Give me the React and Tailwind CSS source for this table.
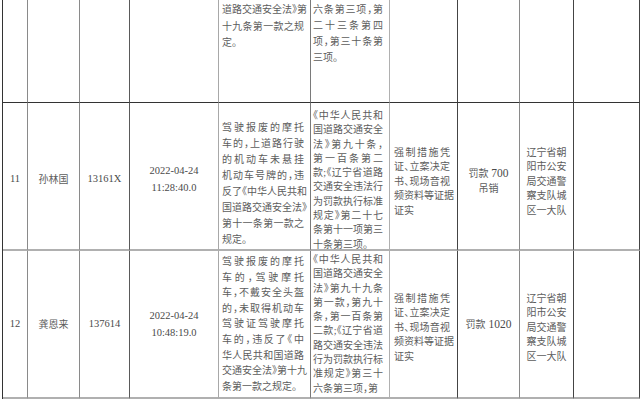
import React from 'react';

const cjk = "font-['Liberation_Serif','Noto_Sans_CJK_SC',serif] [font-feature-settings:'halt']";

const Lines = ({ lines, lead = 'leading-[16px]', justify = true, center = false }) => (
  <div className={`${lead} ${center ? 'text-center' : ''}`}>
    {lines.map((l, i) => {
      const last = i === lines.length - 1;
      return (
        <div
          key={i}
          className={`whitespace-nowrap ${
            justify && !last ? 'text-justify [text-align-last:justify]' : center ? 'text-center' : 'text-left'
          }`}
        >
          {l}
        </div>
      );
    })}
  </div>
);

const evidence = ['强制措施凭', '证、立案决定', '书、现场音视', '频资料等证据', '证实'];
const unit = ['辽宁省朝', '阳市公安', '局交通警', '察支队城', '区一大队'];

const rows = [
  {
    no: '11',
    name: '孙林国',
    id: '13161X',
    date: '2022-04-24',
    time: '11:28:40.0',
    act: [
      '驾驶报废的摩托',
      '车的，上道路行驶',
      '的机动车未悬挂',
      '机动车号牌的，违',
      '反了《中华人民共和',
      '国道路交通安全法》',
      '第十一条第一款之',
      '规定。',
    ],
    law: [
      '《中华人民共和',
      '国道路交通安全',
      '法》第九十条，',
      '第一百条第二',
      '款;《辽宁省道路',
      '交通安全违法行',
      '为罚款执行标准',
      '规定》第二十七',
      '条第十一项第三',
      '十条第三项。',
    ],
    fine: ['罚款 700', '吊销'],
    pad: {
      base: 'pt-[6px]',
      act: 'pt-[17px] leading-[16px]',
      law: 'pt-[6px]',
      side: 'pt-[12px]',
      fine: 'pt-[10px]',
    },
  },
  {
    no: '12',
    name: '龚恩来',
    id: '137614',
    date: '2022-04-24',
    time: '10:48:19.0',
    act: [
      '驾驶报废的摩托',
      '车的，驾驶摩托',
      '车，不戴安全头盔',
      '的，未取得机动车',
      '驾驶证驾驶摩托',
      '车的，违反了《中',
      '华人民共和国道路',
      '交通安全法》第十九',
      '条第一款之规定。',
    ],
    law: [
      '《中华人民共和',
      '国道路交通安全',
      '法》第九十九条',
      '第一款，第九十',
      '条，第一百条第',
      '二款;《辽宁省道',
      '路交通安全违法',
      '行为罚款执行标',
      '准规定》第三十',
      '六条第三项，第',
    ],
    fine: ['罚款 1020'],
    pad: {
      base: 'pt-0',
      act: 'pt-[3px] leading-[15.6px]',
      law: 'pt-[2px]',
      side: 'pt-[8px]',
      fine: 'pt-0',
    },
  },
];

const rightLines = [
  'border-r-[#8a8a8a]',
  'border-r-[#8a8a8a]',
  'border-r-[#5a5a5a]',
  'border-r-[#a8a8a8]',
  'border-r-[#7a7a7a]',
  'border-r-[#b0b0b0]',
  'border-r-[#444]',
  'border-r-[#8a8a8a]',
  'border-r-[#444]',
  'border-r-[#444]',
];

const rowLine = 'border-b-2 border-b-[#b0b0b0]';

const Cell = ({ i, row, className = '', children }) => (
  <div className={`border-r ${rightLines[i]} ${row} flex flex-col ${className}`}>{children}</div>
);

export default function App() {
  return (
    <div className={`w-[641px] h-[400px] bg-white overflow-hidden text-[10px] text-[#5c5c5c] ${cjk}`}>
      <div className="ml-[2px] border-l border-l-[#333] grid grid-cols-[25px_52px_50px_89px_92px_79px_68px_62px_54px_66px] grid-rows-[103px_148px_148px]">
        {/* tail of the previous record */}
        {[0, 1, 2, 3].map((i) => (
          <Cell key={i} i={i} row="border-b border-b-[#333]" />
        ))}
        <Cell i={4} row="border-b border-b-[#333]" className="pt-[2px] pl-[3px] pr-[6px]">
          <Lines lines={['道路交通安全法》第', '十九条第一款之规', '定。']} lead="leading-[16.5px]" />
        </Cell>
        <Cell i={5} row="border-b border-b-[#333]" className="pt-[2px] pl-[2px] pr-[6px]">
          <Lines lines={['六条第三项，第', '二十三条第四', '项，第三十条第', '三项。']} lead="leading-[16px]" />
        </Cell>
        {[6, 7, 8, 9].map((i) => (
          <Cell key={i} i={i} row="border-b border-b-[#333]" />
        ))}

        {rows.map((r) => (
          <React.Fragment key={r.no}>
            <Cell i={0} row={rowLine} className={`items-center justify-center text-[10.5px] text-[#4a4a4a] ${r.pad.base}`}>
              {r.no}
            </Cell>
            <Cell i={1} row={rowLine} className={`items-center justify-center ${r.pad.base}`}>
              {r.name}
            </Cell>
            <Cell i={2} row={rowLine} className={`items-center justify-center text-[10.5px] text-[#4a4a4a] ${r.pad.base}`}>
              {r.id}
            </Cell>
            <Cell
              i={3}
              row={rowLine}
              className={`items-center justify-center text-[10.5px] text-[#4a4a4a] leading-[17px] ${r.pad.base}`}
            >
              <div>{r.date}</div>
              <div>{r.time}</div>
            </Cell>
            <Cell i={4} row={rowLine} className={`pl-[3px] pr-[6px] ${r.pad.act}`}>
              <Lines lines={r.act} lead="" />
            </Cell>
            <Cell i={5} row={rowLine} className={`pl-[2px] pr-[6px] ${r.pad.law}`}>
              <Lines lines={r.law} lead="leading-[14.3px]" />
            </Cell>
            <Cell i={6} row={rowLine} className={`justify-center pl-[4px] pr-[7px] ${r.pad.side}`}>
              <Lines lines={evidence} lead="leading-[14.5px]" />
            </Cell>
            <Cell i={7} row={rowLine} className={`items-center justify-center leading-[15px] ${r.pad.fine}`}>
              {r.fine.map((f) => (
                <div key={f} className="whitespace-nowrap">
                  {f.split(' ').map((part, k) =>
                    k === 0 ? (
                      <span key={k}>{part}</span>
                    ) : (
                      <span key={k} className="text-[11.5px] text-[#4a4a4a]"> {part}</span>
                    )
                  )}
                </div>
              ))}
            </Cell>
            <Cell i={8} row={rowLine} className={`items-center justify-center ${r.pad.side}`}>
              <Lines lines={unit} lead="leading-[14.5px]" justify={false} center />
            </Cell>
            <Cell i={9} row={rowLine} />
          </React.Fragment>
        ))}
      </div>
    </div>
  );
}
